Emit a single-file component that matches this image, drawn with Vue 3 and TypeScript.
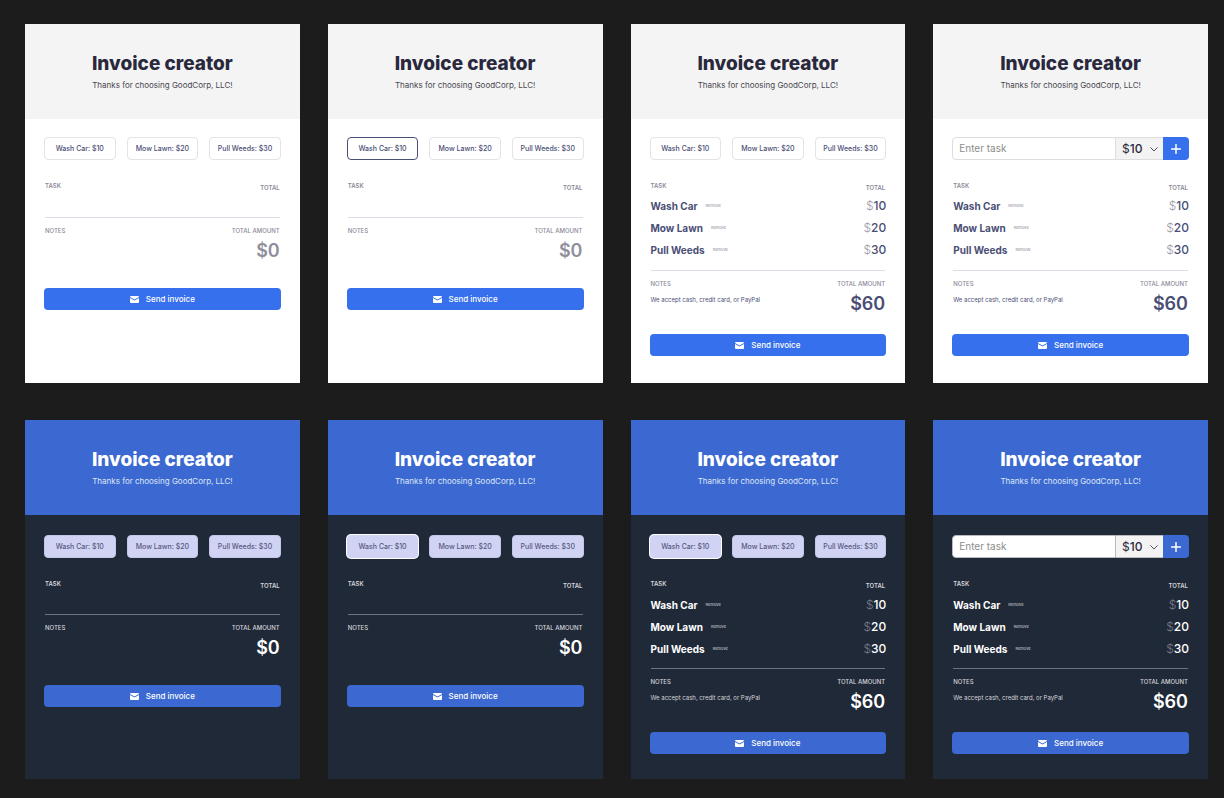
<script setup lang="ts">
import { reactive } from 'vue'

interface Service {
  name: string
  price: number
}

interface Invoice {
  id: string
  dark: boolean
  custom: boolean
  highlighted: string | null
  items: Service[]
  draft: string
  draftPrice: number
}

const services: Service[] = [
  { name: 'Wash Car', price: 10 },
  { name: 'Mow Lawn', price: 20 },
  { name: 'Pull Weeds', price: 30 },
]

function makeInvoice(id: string, dark: boolean, filled: boolean, highlighted: string | null, custom = false): Invoice {
  return { id, dark, custom, highlighted, items: filled ? [...services] : [], draft: '', draftPrice: 10 }
}

const invoices = reactive<Invoice[]>([
  makeInvoice('light-empty', false, false, null),
  makeInvoice('light-focus', false, false, 'Wash Car'),
  makeInvoice('light-filled', false, true, null),
  makeInvoice('light-custom', false, true, null, true),
  makeInvoice('dark-empty', true, false, null),
  makeInvoice('dark-focus', true, false, 'Wash Car'),
  makeInvoice('dark-filled', true, true, 'Wash Car'),
  makeInvoice('dark-custom', true, true, null, true),
])

function total(invoice: Invoice): number {
  return invoice.items.reduce((sum, item) => sum + item.price, 0)
}

function addService(invoice: Invoice, service: Service): void {
  invoice.highlighted = service.name
  if (!invoice.items.some((item) => item.name === service.name)) {
    invoice.items.push(service)
  }
}

function addDraft(invoice: Invoice): void {
  const name = invoice.draft.trim()
  if (!name) return
  invoice.items.push({ name, price: invoice.draftPrice })
  invoice.draft = ''
}

function send(invoice: Invoice): void {
  invoice.items = []
  invoice.highlighted = null
}
</script>

<template>
  <main class="board">
    <article v-for="invoice in invoices" :key="invoice.id" class="card" :class="{ dark: invoice.dark }">
      <header class="head">
        <h1>Invoice creator</h1>
        <p>Thanks for choosing GoodCorp, LLC!</p>
      </header>

      <div class="body">
        <form v-if="invoice.custom" class="entry" @submit.prevent="addDraft(invoice)">
          <input v-model="invoice.draft" class="task-input" type="text" placeholder="Enter task" aria-label="Task" />
          <div class="price">
            <label :for="invoice.id + '-price'">$</label>
            <select :id="invoice.id + '-price'" v-model="invoice.draftPrice">
              <option :value="10">10</option>
              <option :value="20">20</option>
              <option :value="30">30</option>
            </select>
            <svg class="chevron" viewBox="0 0 8 5" aria-hidden="true">
              <path d="M0.7 0.7 L4 4 L7.3 0.7" fill="none" stroke="currentColor" stroke-width="1" stroke-linecap="round" stroke-linejoin="round" />
            </svg>
          </div>
          <button class="add" type="submit" aria-label="Add task">
            <svg viewBox="0 0 10 10" aria-hidden="true">
              <path d="M5 0.6 V9.4 M0.6 5 H9.4" stroke="currentColor" stroke-width="1.5" stroke-linecap="round" />
            </svg>
          </button>
        </form>
        <div v-else class="chips">
          <button
            v-for="service in services"
            :key="service.name"
            type="button"
            class="chip"
            :class="{ active: invoice.highlighted === service.name }"
            @click="addService(invoice, service)"
          >{{ service.name }}: ${{ service.price }}</button>
        </div>

        <div class="tasks">
          <table>
            <thead>
              <tr>
                <th scope="col">TASK</th>
                <th scope="col" class="right">TOTAL</th>
              </tr>
            </thead>
            <tbody>
              <tr v-for="(item, index) in invoice.items" :key="item.name">
                <td>
                  <div class="task">
                    <span class="name">{{ item.name }}</span>
                    <button type="button" class="remove" @click="invoice.items.splice(index, 1)">Remove</button>
                  </div>
                </td>
                <td class="amount"><span class="currency">$</span>{{ item.price }}</td>
              </tr>
            </tbody>
          </table>
        </div>

        <section class="summary" :class="{ empty: !invoice.items.length }">
          <div>
            <h2>NOTES</h2>
            <p v-if="invoice.items.length" class="note">We accept cash, credit card, or PayPal</p>
          </div>
          <div class="right">
            <h2>TOTAL AMOUNT</h2>
            <p class="sum">${{ total(invoice) }}</p>
          </div>
        </section>

        <button type="button" class="send" @click="send(invoice)">
          <svg viewBox="0 0 9 7" aria-hidden="true">
            <path d="M0.9 0 H8.1 Q9 0 9 0.9 L4.5 3.5 L0 0.9 Q0 0 0.9 0 Z M0 2 L4.5 4.6 L9 2 V6.1 Q9 7 8.1 7 H0.9 Q0 7 0 6.1 Z" fill="currentColor" />
          </svg>
          <span>Send invoice</span>
        </button>
      </div>
    </article>
  </main>
</template>

<style>
body {
  margin: 0;
  background: #1c1c1c;
}
</style>

<style scoped>
.board {
  box-sizing: border-box;
  min-height: 100vh;
  display: grid;
  grid-template-columns: repeat(4, minmax(0, 1fr));
  grid-auto-rows: minmax(359px, auto);
  align-content: start;
  gap: 37px 28px;
  padding: 24px 16px 19px 25px;
  font-family: Inter, 'Liberation Sans', sans-serif;
}

.board * {
  box-sizing: border-box;
}

h1,
h2,
p {
  margin: 0;
}

button,
input,
select {
  margin: 0;
  padding: 0;
  border: 0;
  font: inherit;
  color: inherit;
}

button {
  cursor: pointer;
}

.card {
  --head: #f4f4f4;
  --title: #29283c;
  --subtitle: #47464f;
  --surface: #ffffff;
  --label: #8b8998;
  --text: #4a4e74;
  --total: #4a4e74;
  --zero: #918e9b;
  --rule: #dedce8;
  --accent: #3770ed;
  --currency: #9c9ba8;
  --chip: #ffffff;
  --chip-border: #e3e3e6;
  --chip-text: #4a4e74;
  --field-border: #dddde0;
  background: var(--surface);
  color: var(--text);
}

.card.dark {
  --head: #3b69d1;
  --title: #ffffff;
  --subtitle: #dfe6f7;
  --surface: #202937;
  --label: #d5d5dc;
  --text: #ffffff;
  --total: #ffffff;
  --zero: #ffffff;
  --rule: #6d7480;
  --accent: #3b69d1;
  --currency: #7b7c8a;
  --chip: #d0d3f4;
  --chip-border: #c3c6e4;
  --chip-text: #57587e;
  --field-border: #b9b9bf;
}

.head {
  height: 95px;
  padding-top: 28px;
  background: var(--head);
  text-align: center;
}

.head h1 {
  font-size: 19px;
  line-height: 24px;
  font-weight: 800;
  color: var(--title);
}

.head p {
  margin-top: 4px;
  font-size: 8px;
  line-height: 10px;
  color: var(--subtitle);
}

.body {
  padding: 18px 19px 25px;
}

.dark .body {
  padding-top: 20px;
}

.chips {
  display: grid;
  grid-template-columns: repeat(3, minmax(0, 1fr));
  gap: 11px;
}

.chip {
  height: 23px;
  border: 1px solid var(--chip-border);
  border-radius: 4px;
  background: var(--chip);
  color: var(--chip-text);
  font-size: 7px;
  line-height: 10px;
  font-weight: 500;
  white-space: nowrap;
}

.chip.active {
  border-color: #4a4e74;
}

.dark .chip.active {
  border-color: var(--chip);
  box-shadow: 0 0 0 1px #ffffff;
}

.entry {
  display: flex;
  height: 23px;
}

.task-input {
  flex: 1;
  min-width: 0;
  padding: 0 6px 1px;
  border: 1px solid var(--field-border);
  border-radius: 4px 0 0 4px;
  background: #ffffff;
  color: #29283c;
  font-size: 10px;
}

.task-input::placeholder {
  color: #8c8c8c;
  opacity: 1;
}

.price {
  position: relative;
  display: flex;
  align-items: center;
  width: 47px;
  padding-left: 6px;
  border: solid var(--field-border);
  border-width: 1px 0;
  background: #f3f3f3;
  color: #29283c;
  font-size: 12px;
}

.price select {
  flex: 1;
  min-width: 0;
  appearance: none;
  background: transparent;
  font-weight: 500;
}

.chevron {
  position: absolute;
  right: 5px;
  top: 9px;
  width: 8px;
  height: 5px;
  color: #55555f;
  pointer-events: none;
}

.add {
  display: grid;
  place-items: center;
  width: 26px;
  border-radius: 0 4px 4px 0;
  background: var(--accent);
  color: #ffffff;
}

.add svg {
  width: 10px;
  height: 10px;
}

.tasks {
  min-height: 26px;
  margin: 22px 0 9px;
}

.dark .tasks {
  margin-bottom: 8px;
}

table {
  width: 100%;
  border-collapse: collapse;
}

th,
td {
  padding: 0;
  text-align: left;
}

th {
  height: 13px;
  padding-left: 1px;
  font-size: 6px;
  line-height: 8px;
  font-weight: 600;
  color: var(--label);
  vertical-align: top;
}

.dark th {
  height: 14px;
}

th.right {
  padding-top: 2px;
  padding-right: 1px;
}

.right {
  text-align: right;
}

td {
  height: 22px;
}

.task {
  display: flex;
  align-items: center;
  gap: 8px;
  padding-left: 1px;
}

.name {
  font-size: 10px;
  line-height: 14px;
  font-weight: 700;
}

.remove {
  background: transparent;
  color: var(--label);
  font-size: 4px;
  line-height: 6px;
}

.amount {
  text-align: right;
  font-size: 12px;
  line-height: 16px;
  font-weight: 500;
}

.currency {
  font-weight: 300;
  color: var(--currency);
}

.summary {
  display: flex;
  justify-content: space-between;
  margin: 0 1px 18px;
  padding-top: 9px;
  border-top: 1px solid var(--rule);
}

.summary.empty {
  margin-bottom: 25px;
}

.summary h2 {
  font-size: 6px;
  line-height: 8px;
  font-weight: 500;
  color: var(--label);
}

.note {
  margin-top: 8px;
  font-size: 6px;
  line-height: 8px;
}

.dark .note {
  color: #d5d5dc;
}

.sum {
  margin-top: 4px;
  font-size: 18px;
  line-height: 24px;
  font-weight: 600;
  color: var(--total);
}

.empty .sum {
  color: var(--zero);
}

.send {
  display: flex;
  align-items: center;
  justify-content: center;
  gap: 7px;
  width: 100%;
  height: 22px;
  border-radius: 4px;
  background: var(--accent);
  color: #ffffff;
  font-size: 8px;
  line-height: 10px;
  font-weight: 500;
}

.send svg {
  width: 9px;
  height: 7px;
}
</style>
